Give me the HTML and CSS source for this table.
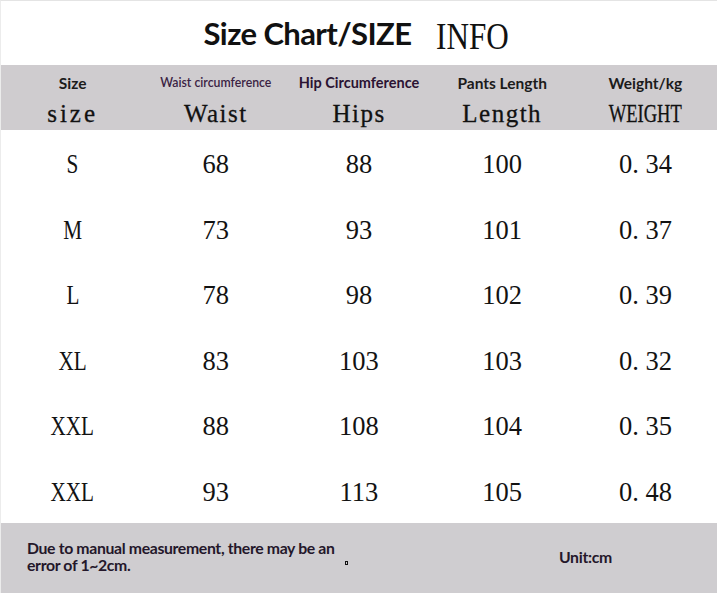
FILE: index.html
```html
<!DOCTYPE html>
<html>
<head>
<meta charset="utf-8">
<link rel="stylesheet" href="styles.css">
</head>
<body>
<div class="page">
  <div class="title">
    <span class="title-main">Size Chart/SIZE</span>
    <span class="title-info">INFO</span>
  </div>
  <div class="head">
    <div class="hcell"><span class="lbl">Size</span><span class="word sz">size</span></div>
    <div class="hcell"><span class="lbl small">Waist circumference</span><span class="word">Waist</span></div>
    <div class="hcell"><span class="lbl purple">Hip Circumference</span><span class="word">Hips</span></div>
    <div class="hcell"><span class="lbl">Pants Length</span><span class="word">Length</span></div>
    <div class="hcell"><span class="lbl">Weight/kg</span><span class="word narrow">WEIGHT</span></div>
  </div>
  <div class="rows">
    <div class="row"><span class="cell"><span class="cap">S</span></span><span class="cell">68</span><span class="cell">88</span><span class="cell">100</span><span class="cell">0. 34</span></div>
    <div class="row"><span class="cell"><span class="cap">M</span></span><span class="cell">73</span><span class="cell">93</span><span class="cell">101</span><span class="cell">0. 37</span></div>
    <div class="row"><span class="cell"><span class="cap">L</span></span><span class="cell">78</span><span class="cell">98</span><span class="cell">102</span><span class="cell">0. 39</span></div>
    <div class="row"><span class="cell"><span class="cap">XL</span></span><span class="cell">83</span><span class="cell">103</span><span class="cell">103</span><span class="cell">0. 32</span></div>
    <div class="row"><span class="cell"><span class="cap">XXL</span></span><span class="cell">88</span><span class="cell">108</span><span class="cell">104</span><span class="cell">0. 35</span></div>
    <div class="row"><span class="cell"><span class="cap">XXL</span></span><span class="cell">93</span><span class="cell">113</span><span class="cell">105</span><span class="cell">0. 48</span></div>
  </div>
  <div class="foot">
    <p class="note">Due to manual measurement, there may be an error of 1~2cm.</p>
    <span class="speck"></span>
    <span class="unit">Unit:cm</span>
  </div>
</div>
</body>
</html>
```
FILE: styles.css
```css
html, body {
  margin: 0;
  padding: 0;
  background: #ffffff;
}
.page {
  width: 717px;
  height: 593px;
  display: flex;
  flex-direction: column;
  border-top: 1px solid #e4e4e4;
  border-left: 1px solid #ececec;
  box-sizing: border-box;
}
.title {
  height: 64px;
  display: flex;
  align-items: center;
  justify-content: center;
  gap: 25px;
  padding-right: 4px;
}
.title-main {
  font-family: Lato, "Open Sans", sans-serif;
  font-weight: 700;
  font-size: 31px;
  color: #111111;
  letter-spacing: -0.6px;
}
.title-info {
  display: inline-block;
  width: 74px;
  font-family: "Liberation Serif", serif;
  font-size: 38px;
  color: #111111;
  transform: scaleX(0.82);
  transform-origin: left center;
  margin-top: 5px;
}
.head {
  height: 65px;
  background: #cfcccf;
  display: grid;
  grid-template-columns: repeat(5, 1fr);
}
.hcell {
  display: flex;
  flex-direction: column;
  align-items: center;
  padding-top: 9px;
}
.lbl {
  font-family: Lato, sans-serif;
  font-weight: 700;
  font-size: 15.5px;
  line-height: 18px;
  height: 18px;
  color: #1b1b1b;
}
.lbl.small {
  font-size: 12.3px;
  font-weight: 600;
  color: #3b2344;
}
.lbl.purple {
  font-size: 14.5px;
  color: #2b1333;
}
.word {
  display: inline-block;
  font-family: "Liberation Serif", serif;
  font-size: 25px;
  line-height: 28px;
  margin-top: 8px;
  color: #111111;
  letter-spacing: 1.5px;
  -webkit-text-stroke: 0.3px #111;
}
.word.sz {
  letter-spacing: 3px;
}
.word.narrow {
  letter-spacing: 0;
  transform: scaleX(0.74);
}
.rows {
  flex: 1;
  display: flex;
  flex-direction: column;
}
.row {
  flex: 1;
  display: grid;
  grid-template-columns: repeat(5, 1fr);
  align-items: center;
}
.cell {
  text-align: center;
  font-family: "Liberation Serif", serif;
  font-size: 26.5px;
  color: #121212;
  padding-top: 4px;
}
.cap {
  display: inline-block;
  transform: scaleX(0.8);
}
.foot {
  height: 70px;
  background: #cfcdd0;
  display: flex;
  align-items: center;
  padding-left: 26px;
  padding-bottom: 4px;
  box-sizing: border-box;
  font-family: Lato, sans-serif;
  font-weight: 700;
  font-size: 15.8px;
  color: #24172a;
}
.note {
  margin: 0;
  width: 318px;
  line-height: 17px;
  letter-spacing: -0.35px;
}
.speck {
  width: 3px;
  height: 4px;
  border: 1px solid #111;
  box-sizing: border-box;
  margin-left: 0;
  margin-top: 14px;
}
.unit {
  margin-left: auto;
  margin-right: 105px;
  letter-spacing: -0.3px;
}
```
